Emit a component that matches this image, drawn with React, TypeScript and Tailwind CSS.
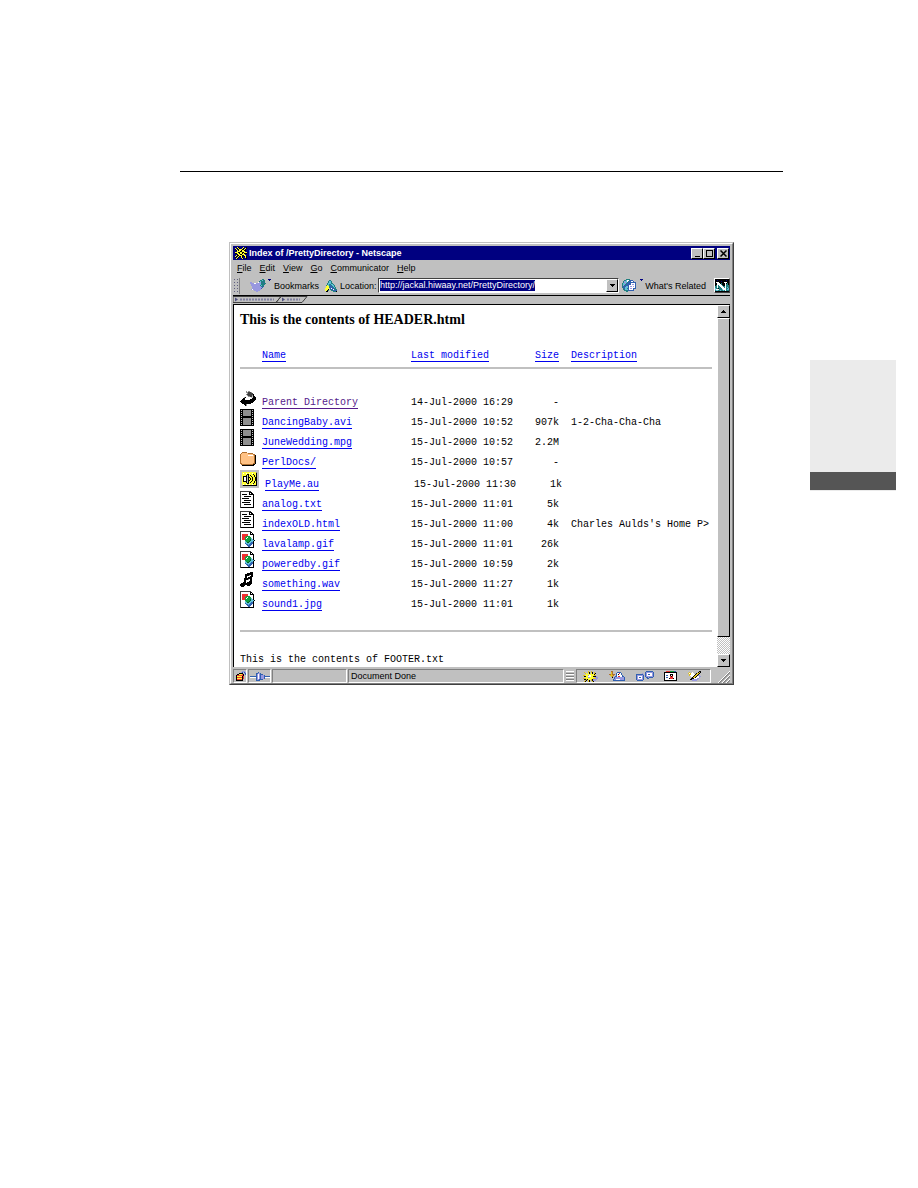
import React from "react";

type Palette = Record<string, string>;

const palette: Palette = {
  k: "#000000",
  d: "#404040",
  g: "#909090",
  s: "#c0c0c0",
  w: "#ffffff",
  y: "#ffff33",
  Y: "#e0c020",
  o: "#ffc285",
  O: "#b07030",
  r: "#f03030",
  G: "#10a040",
  D: "#086028",
  b: "#3060b0",
  B: "#000080",
  l: "#9898e0",
  t: "#208080",
  c: "#60c0d8",
};

function Pixels({ rows, className = "" }: { rows: string[]; className?: string }) {
  return (
    <svg
      aria-hidden="true"
      className={`block shrink-0 ${className}`}
      width={rows[0].length}
      height={rows.length}
      shapeRendering="crispEdges"
    >
      {rows.flatMap((row, y) =>
        [...row].map((p, x) =>
          palette[p] ? <rect key={`${x}-${y}`} x={x} y={y} width="1" height="1" fill={palette[p]} /> : null,
        ),
      )}
    </svg>
  );
}

const icons: Record<string, string[]> = {
  back: [
    "......g.gg......",
    "......ggdddg....",
    ".......gddddd...",
    "......gddddddk..",
    ".......gddddgk..",
    "........ggddskk.",
    "....gk.....sskkk",
    "...kk.......kkkk",
    "..kkk.....kkkkkk",
    ".kkkkkkkkkkkkkk.",
    "kkkkkkkkkkkkkk..",
    ".kkkkkkkkkkkk...",
    "..kkkkkkkkk.....",
    "....kkg.........",
    ".....kg.........",
    "................",
    "................",
  ],
  movie: [
    "kkkkkkkkkkkkkk..",
    "kskggggggggksk..",
    "kkkggggggggkkk..",
    "kskggggggggksk..",
    "kkkggggggggkkk..",
    "kskggggggggksk..",
    "kkkggggggggkkk..",
    "kskkkkkkkkkksk..",
    "kkkkkkkkkkkkkk..",
    "kskggggggggksk..",
    "kkkggggggggkkk..",
    "kskggggggggksk..",
    "kkkggggggggkkk..",
    "kskggggggggksk..",
    "kkkggggggggkkk..",
    "kskggggggggksk..",
    "kkkkkkkkkkkkkk..",
    "................",
    "................",
  ],
  folder: [
    "..OOOOO.........",
    ".OooooooOOOOO...",
    "OooooooooooooOO.",
    "OooooooowwwwwoOk",
    "OoooooooooooooOk",
    "OoooooooooooooOk",
    "OoooooooooooooOk",
    "OoooooooooooooOk",
    "OoooooooooooooOk",
    "OoooooooooooooOk",
    "OoooooooooooooOk",
    "OOoooooooooooOOk",
    ".OOOOOOOOOOOOkk.",
    "..kkkkkkkkkkkk..",
    "................",
    "................",
  ],
  sound: [
    "sssssssssssssssssss",
    "sssssssssssssssssss",
    "ssyyyyyyyyyyyyyygss",
    "ssywyywyywyywyyykss",
    "ssyyyyykkyyyykyykss",
    "ssyyyykskykyyykykss",
    "ssykkkkskyykyykykss",
    "ssykwwkskkyykyykkss",
    "ssykwwkskykykyykkss",
    "ssykwwkskykykyykkss",
    "ssykwwkskkyykyykkss",
    "ssykkkkskyykyykykss",
    "ssyyyykskykyyykykss",
    "ssyyyyykkyyyykyykss",
    "ssywyywyywyywyyykss",
    "ssgkkkkkkkkkkkkkkss",
    "sssssssssssssssssss",
    "sssssssssssssssssss",
    "...................",
    "...................",
  ],
  text: [
    "ddddddddddd.....",
    "dwwwwwwwwkkk....",
    "dwwwwwwwwkwkk...",
    "dwkkkkkwwkkkkk..",
    "dwwwwwwwwwwwwk..",
    "dwwwkkkkkkkwwk..",
    "dwwwwwwwwwwwwk..",
    "dwkkkkkkkwwwwk..",
    "dwwwwwwwwwwwwk..",
    "dwwwkkkkkkkwwk..",
    "dwwwwwwwwwwwwk..",
    "dwkkkkkkkkwwwk..",
    "dwwwwwwwwwwwwk..",
    "dwwwkkkkkkkwwk..",
    "dwwwwwwwwwwwwk..",
    "dwwwwwwwwwwwwk..",
    "dkkkkkkkkkkkkk..",
    "................",
    "................",
  ],
  image: [
    "ddddddddddd.....",
    "dwwwwwwwwwkk....",
    "dwwwwwwwwwkwk...",
    "dwrrrrrrwwkkkk..",
    "dwrrrrrrwwwwwk..",
    "dwrrrrGGGGwwwk..",
    "dwrrrGGwGGGwwk..",
    "dwrrrGwGGGGcwk..",
    "dwrrrGGGGGDcck..",
    "dwwwwGGGGGDccck.",
    "dwwwwcGGGDccck..",
    "dwwwwccDDccbbk..",
    "dwwwwbccccbbbk..",
    "dwwwwwbbcbbbwk..",
    "dwwwwwwbbbbwwk..",
    "dwwwwwwwbbwwwk..",
    "dkkkkkkkkkkkkk..",
    "................",
    "................",
  ],
  music: [
    "..........kkk...",
    ".......kkkkkk...",
    ".....kkkkkkkk...",
    ".....kkkkg.kk...",
    ".....kk...kkk...",
    ".....kk.kkkk....",
    "....kkkkkkkk....",
    "....kkkkg.kk....",
    "....kk....kk....",
    "....kk...kkk....",
    "...kkk.kkkkk....",
    ".kkkkkkkkkkk....",
    "kkkkkkkkkkk.....",
    "kkkkk..kkk......",
    ".kkk............",
    "................",
    "................",
    "................",
  ],
  app: [
    "..yk....y..k",
    "y.kyk..yk.yk",
    "ky.kyyykkyk.",
    ".kykyykyykk.",
    "..yyykkyyy..",
    "yyykkyykkyyy",
    "kkyykyykykkk",
    "..kyykkyyy..",
    ".ykkyyykkyy.",
    "yk.ykkyk.kyk",
    "k.yk..yk..yk",
    ".yk....yk..k",
  ],
  bookmark: [
    "............tt....BBB",
    "..........ttctt....B.",
    ".........tctttt......",
    "ll......wllttbt......",
    "llllwwlllllttttt.....",
    ".lllllllllctttt......",
    ".llllllllltctt.......",
    "..lllllllllttb.......",
    "..llllllllllb........",
    "..lllllllllb.........",
    ".lwllllllll..........",
    "....llllll...........",
    "......ll.............",
  ],
  location: [
    "....tt......",
    "...tcct.....",
    "...tcct.....",
    "..tccctt....",
    "..tcttcct...",
    ".tyctbtcct..",
    ".yyytbbtct..",
    ".yyytbbbtct.",
    "yyyy.bwbbtt.",
    "yyyk.tbbwbtt",
    "yykt..ttbbbb",
    ".kk.....tttk",
  ],
  related: [
    "....tttt..........BBB",
    "..ttcwwtbbb........B.",
    ".tlccwtbbwwb.........",
    ".tllctbbbbbbbb.......",
    "tccltbbbbwwwwb.......",
    "tcctbbbbbwllwb.......",
    "tltbbbbwwwwwwb.......",
    "tbbbccbwllwlwb.......",
    "tbbcccbwwwwwwb.......",
    ".tbcctbwllwbbb.......",
    ".ttcccbwwwwb.........",
    "..ttttbbbbbb.........",
    "....tt...............",
  ],
  netscape: [
    "kkkkkkkkkkkkkk",
    "kkBkkkkkkkkBkk",
    "kkkkkkBkkkkkkk",
    "kwwwkkkkkwwwkk",
    "kkwwwktkkkwktk",
    "kkwwwwtkkkwttk",
    "ktwtwwwtkkwttt",
    "ttwttwwwttwttt",
    "ttwtttwwwtwtct",
    "cttktttwwwwttc",
    "cwwwtttcwwwtcc",
    "tccttcttctwttt",
    "kkkkkkkkkkkkkk",
  ],
  lock: [
    ".......lll.",
    "......lb.bl",
    "....kkkk.lb",
    "..kkyyyrk.b",
    ".krrrrrrk..",
    ".kyyyyykr..",
    ".krrrrrkr..",
    ".kyyyyykr..",
    ".krrrrrk...",
    ".kkkkkkk...",
  ],
  plug: [
    "........b...........",
    "......bbllb.........",
    "......blwlbbb.......",
    "......blwlblllb.....",
    "bbbbbbblwlblllbbbbbb",
    "wwwwwwblwlblllbwwwww",
    "......blwlblllb.....",
    "......bllbbbb.......",
    "......bbbb..........",
  ],
  wheel: [
    ".....Y..Y......",
    ".Y...Yk.Yk.Y...",
    "..Yy.yk.yk.Yk..",
    "...yyyyyyyyk...",
    "YYyyylwwyyyYY..",
    ".kkyywwwyykkkl.",
    "..yyyllyyyy.lll",
    "YYYyyyyyyyYYYll",
    ".kkYkyyyYkllll.",
    "..Yk.Yk.Yklll..",
    ".Yk..Yk..Yk....",
  ],
  mail: [
    "..OO............",
    "..YO....bbbb....",
    "..YO...bwwrwb...",
    "OOYOOO.bwkwwb...",
    ".YYYO..bwwwwwb..",
    "..YO..bbwrrwwbb.",
    "...k.blllllllllb",
    ".....blllllllllb",
    "....bllwwwwllllb",
    "....bbbbbbbbbbbb",
  ],
  chat: [
    "..........bbbbbbb.",
    ".........blllllllb",
    "......l..blwwwwwlb",
    "bbbbbbbl.blwbbwwlb",
    "bllllllb.blwwwwwlb",
    "blwwwwlb.blllllllb",
    "blwbbwlb..bblbbbb.",
    "blwwwwlb...bb.....",
    "bllllllb..........",
    ".bbbbbb...........",
  ],
  card: [
    "..rrrrGGGGbb.",
    "kkkkkkkkkkkkk",
    "kwwwwwwwwwwwk",
    "kwwwwwkkkwwwk",
    "kwbbwwkwkwwwk",
    "kwwwwwrkrwwwk",
    "kwbbwwrrrwwwk",
    "kwwwwkrrrkwwk",
    "kwwwwwwwwwwwk",
    "kkkkkkkkkkkkk",
  ],
  pencil: [
    "...........kk.",
    ".Y..w.....kYk.",
    "YwYwww..kYYk..",
    ".YYwwwwkYYk...",
    ".YwwwwkYYkll..",
    "...wwkYYkwwll.",
    "....kYYkwwwl..",
    "...kkkwwwll...",
    "..kkllllll....",
    "....lllll.....",
  ],
};

type Entry = [icon: string, name: string, modified: string, size: string, description?: string];

const entries: Entry[] = [
  ["back", "Parent Directory", "14-Jul-2000 16:29", "-"],
  ["movie", "DancingBaby.avi", "15-Jul-2000 10:52", "907k", "1-2-Cha-Cha-Cha"],
  ["movie", "JuneWedding.mpg", "15-Jul-2000 10:52", "2.2M"],
  ["folder", "PerlDocs/", "15-Jul-2000 10:57", "-"],
  ["sound", "PlayMe.au", "15-Jul-2000 11:30", "1k"],
  ["text", "analog.txt", "15-Jul-2000 11:01", "5k"],
  ["text", "indexOLD.html", "15-Jul-2000 11:00", "4k", "Charles Aulds's Home P>"],
  ["image", "lavalamp.gif", "15-Jul-2000 11:01", "26k"],
  ["image", "poweredby.gif", "15-Jul-2000 10:59", "2k"],
  ["music", "something.wav", "15-Jul-2000 11:27", "1k"],
  ["image", "sound1.jpg", "15-Jul-2000 11:01", "1k"],
];

const bevel = "border border-t-white border-l-white border-r-black border-b-black bg-[#c0c0c0]";
const sunken = "border border-t-[#808080] border-l-[#808080] border-r-white border-b-white";
const link = "border-b border-[#0000ee] text-[#0000ee]";

function Arrow({ up = false }: { up?: boolean }) {
  return (
    <svg aria-hidden="true" width="5" height="3" shapeRendering="crispEdges">
      <path d={up ? "M2 0h1v1h1v1h1v1H0V2h1V1h1z" : "M0 0h5v1H4v1H3v1H2V2H1V1H0z"} />
    </svg>
  );
}

function TitleBar() {
  return (
    <header className="flex h-[14px] items-center bg-[#000080] pl-[2px] pr-px text-white">
      <Pixels rows={icons.app} />
      <h1 className="ml-[2px] flex-1 whitespace-nowrap text-[9px] leading-[14px] font-bold">
        Index of /PrettyDirectory - Netscape
      </h1>
      <div className="flex h-[11px]">
        <button type="button" aria-label="Minimize" className={`flex w-3 items-end justify-center pb-px ${bevel}`}>
          <span className="h-px w-[5px] bg-black" />
        </button>
        <button type="button" aria-label="Maximize" className={`flex w-3 items-center justify-center ${bevel}`}>
          <span className="h-[7px] w-[7px] border border-black" />
        </button>
        <button type="button" aria-label="Close" className={`ml-[2px] flex w-3 items-center justify-center ${bevel}`}>
          <svg aria-hidden="true" width="7" height="7">
            <path d="M.5.5l6 6M6.5.5l-6 6" stroke="#000" strokeWidth="1.5" />
          </svg>
        </button>
      </div>
    </header>
  );
}

function MenuBar() {
  return (
    <nav aria-label="Menu" className="flex h-4 items-center gap-2 pl-1 text-[9px] leading-3">
      {["File", "Edit", "View", "Go", "Communicator", "Help"].map((item) => (
        <button key={item} type="button">
          <span className="underline">{item[0]}</span>
          {item.slice(1)}
        </button>
      ))}
    </nav>
  );
}

function Toolbar() {
  return (
    <div className="flex h-5 items-center border-b border-black text-[9px] leading-3">
      <div className="h-4 w-[7px] border-r border-[#808080] bg-[radial-gradient(#606080_1px,transparent_1px)] bg-size-[3px_3px]" />
      <button type="button" className="ml-[10px] flex items-center gap-[3px]">
        <Pixels rows={icons.bookmark} />
        Bookmarks
      </button>
      <Pixels rows={icons.location} className="ml-[6px]" />
      <label htmlFor="location" className="ml-[3px] w-[38px] whitespace-nowrap">
        Location:
      </label>
      <div className="flex h-[15px] min-w-0 flex-1 border border-t-[#404040] border-l-[#404040] border-r-white border-b-white bg-white">
        <div className="flex min-w-0 flex-1 items-center pl-px">
          <input
            id="location"
            type="text"
            defaultValue="http://jackal.hiwaay.net/PrettyDirectory/"
            className="field-sizing-content h-[11px] min-w-0 bg-[#000080] text-[9px] leading-[11px] text-white outline-none"
          />
        </div>
        <button type="button" aria-label="Recent locations" className={`flex w-3 items-center justify-center ${bevel}`}>
          <Arrow />
        </button>
      </div>
      <button type="button" className="ml-[3px] flex items-center gap-[2px] whitespace-nowrap">
        <Pixels rows={icons.related} />
        What's Related
      </button>
      <a href="#netscape" aria-label="Netscape" className="ml-2 border border-t-white border-l-white border-r-[#404040] border-b-[#404040]">
        <Pixels rows={icons.netscape} />
      </a>
    </div>
  );
}

function FoldedBars() {
  return (
    <svg aria-hidden="true" className="block" width="76" height="8">
      <path d="M0 .5h48l-5 6H0zM48 .5h26l-5 6H43z" fill="#c0c0c0" stroke="#404040" />
      <path d="M2 1.5v4l3-2zM49 1.5v4l3-2z" fill="#505080" />
      <path d="M7 3.5h34M54 3.5h13" stroke="#8080a0" strokeWidth="2" strokeDasharray="2 1" />
    </svg>
  );
}

function DirectoryTable() {
  return (
    <table className="block font-['Liberation_Mono',monospace] text-[10px] leading-3">
      <thead className="block border-b-2 border-[#c0c0c0] pb-[5px]">
        <tr className="flex items-end text-left">
          <th className="w-[22px] shrink-0" aria-label="Type" />
          <th className="w-[149px] shrink-0 font-normal">
            <a href="#name" className={link}>Name</a>
          </th>
          <th className="w-[114px] shrink-0 font-normal">
            <a href="#modified" className={link}>Last modified</a>
          </th>
          <th className="w-[34px] shrink-0 text-right font-normal">
            <a href="#size" className={link}>Size</a>
          </th>
          <th className="pl-3 font-normal">
            <a href="#description" className={link}>Description</a>
          </th>
        </tr>
      </thead>
      <tbody className="block pt-5">
        {entries.map(([icon, name, modified, size, description]) => (
          <tr key={name} className={`flex items-end ${icon === "sound" ? "h-[22px]" : "h-5"}`}>
            <td className="shrink-0 pr-[6px] pb-px">
              <Pixels rows={icons[icon]} />
            </td>
            <td className="w-[149px] shrink-0">
              <a
                href={`#${name}`}
                className={icon === "back" ? "border-b border-[#551a8b] text-[#551a8b]" : link}
              >
                {name}
              </a>
            </td>
            <td className="w-[114px] shrink-0">{modified}</td>
            <td className="w-[34px] shrink-0 text-right">{size}</td>
            <td className="pl-3 whitespace-nowrap">{description}</td>
          </tr>
        ))}
      </tbody>
    </table>
  );
}

function ScrollBar() {
  return (
    <div aria-hidden="true" className="flex w-[13px] shrink-0 flex-col bg-[repeating-conic-gradient(#c0c0c0_0_25%,#ffffff_0_50%)] bg-size-[2px_2px]">
      <div className={`flex h-[13px] items-center justify-center ${bevel}`}>
        <Arrow up />
      </div>
      <div className={`flex-1 ${bevel}`} />
      <div className={`mt-[17px] flex h-[13px] items-center justify-center ${bevel}`}>
        <Arrow />
      </div>
    </div>
  );
}

function StatusBar() {
  return (
    <footer className="mt-[2px] flex h-[14px] gap-px text-[9px] leading-3">
      <div className={`flex w-[14px] items-center justify-center ${sunken}`}>
        <Pixels rows={icons.lock} />
      </div>
      <div className={`flex w-[23px] items-center justify-center ${sunken}`}>
        <Pixels rows={icons.plug} />
      </div>
      <div className={`w-[75px] ${sunken}`} />
      <div className={`flex-1 pl-[2px] ${sunken}`}>Document Done</div>
      <div className="mx-px my-[2px] w-2 bg-[repeating-linear-gradient(#ffffff_0_1px,#c0c0c0_1px_2px,#808080_2px_3px)]" />
      <div className={`flex w-[135px] items-center justify-between pr-2 pl-[6px] ${sunken}`}>
        <Pixels rows={icons.wheel} />
        <Pixels rows={icons.mail} />
        <Pixels rows={icons.chat} />
        <Pixels rows={icons.card} />
        <Pixels rows={icons.pencil} />
      </div>
      <svg aria-hidden="true" className="ml-[6px] self-end" width="12" height="12">
        <path d="M1 12L12 1M5 12l7-7M9 12l3-3" stroke="#808080" strokeWidth="1.5" />
        <path d="M0 12L12 0M4 12l8-8M8 12l4-4" stroke="#fff" />
      </svg>
    </footer>
  );
}

export default function App() {
  return (
    <div className="flex min-h-screen items-start bg-white pr-[22px] pl-[180px] font-['Liberation_Sans',sans-serif] text-black">
      <main className="min-w-0 flex-1 pt-[171px]">
        <hr className="border-t border-black" />
        <section
          aria-label="Browser window"
          className="mx-[49px] mt-[70px] border border-t-[#c0c0c0] border-r-[#404040] border-b-[#404040] border-l-[#c0c0c0] bg-[#c0c0c0]"
        >
          <div className="border border-t-white border-r-[#808080] border-b-[#808080] border-l-white p-[2px] pb-0">
            <TitleBar />
            <MenuBar />
            <Toolbar />
            <FoldedBars />
            <div className="flex border-t border-l border-black bg-white">
              <article className="min-w-0 flex-1 pt-[7px] pr-[5px] pb-px pl-[6px]">
                <h2 className="font-['Liberation_Serif',serif] text-[14px] leading-4 font-bold">
                  This is the contents of HEADER.html
                </h2>
                <div className="mt-[22px]">
                  <DirectoryTable />
                </div>
                <hr className="mt-[19px] border-t-2 border-[#c0c0c0]" />
                <p className="mt-[22px] font-['Liberation_Mono',monospace] text-[10px] leading-3">
                  This is the contents of FOOTER.txt
                </p>
              </article>
              <ScrollBar />
            </div>
            <StatusBar />
          </div>
        </section>
      </main>
      <aside aria-label="Chapter tab" className="mt-[360px] ml-[27px] w-[86px] border-b border-[#ebebeb] bg-[#ebebeb] pt-28">
        <div className="h-[18px] bg-[#555555]" />
      </aside>
    </div>
  );
}
